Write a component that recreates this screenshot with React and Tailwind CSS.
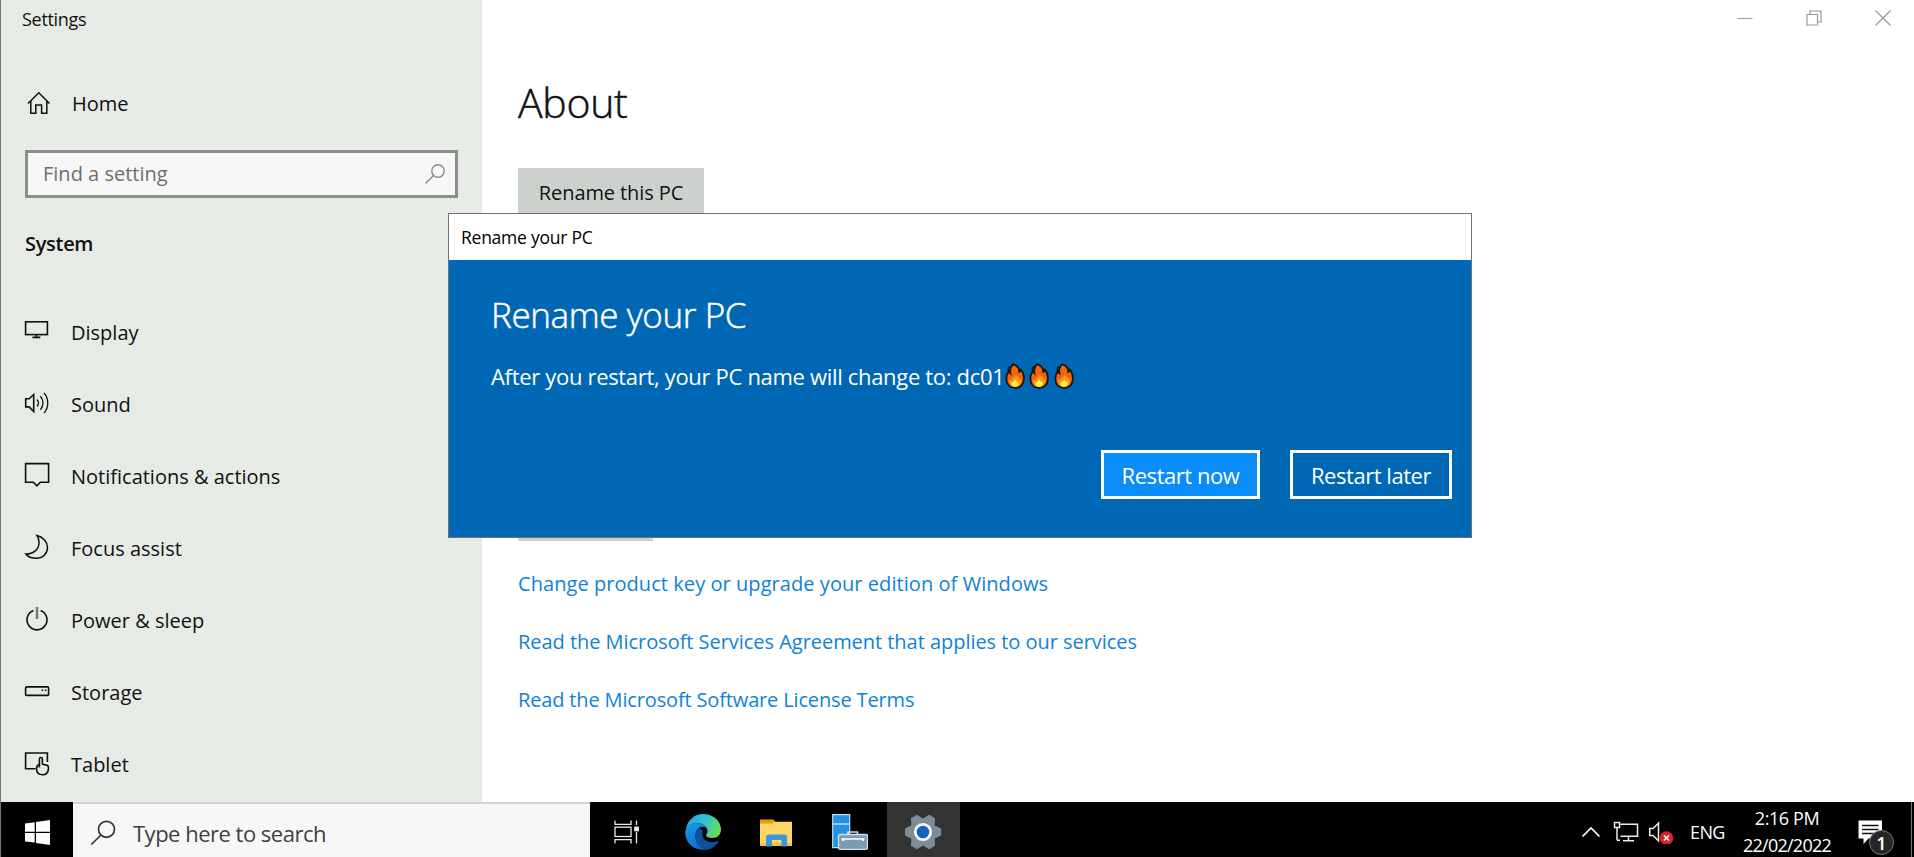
const navItems = [
    {
        label: 'Display',
        icon: (
            <>
                <rect x="1.6" y="5.8" width="21.8" height="12.8" />
                <path d="M12.4 18.6v2.8M8.4 21.4h8" />
            </>
        ),
    },
    {
        label: 'Sound',
        icon: (
            <>
                <path d="M1.7 10.8h3.4l4.6-4.3v17l-4.6-4.6H1.7z" />
                <path d="M13 11.5c1.7 2 1.7 5 0 7M16.4 8.2c3.4 3.8 3.4 9.8 0 13.6M20 5c5 5.4 5 14.6 0 20" strokeWidth="1.3" />
            </>
        ),
    },
    {
        label: 'Notifications & actions',
        icon: <path d="M1.6 3.6h23v18.6h-8.2l-3.5 3.6-3.5-3.6H1.6z" />,
    },
    {
        label: 'Focus assist',
        icon: (
            <path d="M13 3.6c6.2 1.6 10.5 6.2 10.5 12 0 6-4.9 10.7-11 10.7-4.5 0-8.5-1.5-10.7-4.3C9.5 22 15 17.3 15 10.8c0-2.8-.7-5.2-2-7.2z" strokeWidth="1.5" />
        ),
    },
    {
        label: 'Power & sleep',
        icon: (
            <>
                <path d="M9.4 6.5a10 10 0 1 0 7.2 0" />
                <path d="M13 3v12" stroke="#777" strokeWidth="2.4" />
            </>
        ),
    },
    {
        label: 'Storage',
        icon: (
            <>
                <rect x="1.6" y="10.9" width="23" height="8.5" rx="1" />
                <path d="M17.6 14.3h1.6M20.8 14.3h1.6" />
            </>
        ),
    },
    {
        label: 'Tablet',
        icon: (
            <>
                <path d="M11.5 20.8H1.6V5h21.8v9" />
                <path d="M15.4 19.5v-8.3c0-2.2 3-2.2 3 0v5l4 .9c1.8.5 2.3 1.5 2.1 3.5-.4 4-2.2 6.2-5.8 6.2-3.7 0-6-2-6.2-5.5-.1-2.5.7-4.2 2.9-5" />
            </>
        ),
    },
]

const Flame = () => (
    <svg viewBox="0 0 20 26" className="h-[26px] w-5 shrink-0">
        <path
            d="M8.2 1.2c4.3 1.5 6.2 4.3 6 7.8 1-.3 1.5-1 1.7-2.2 2.2 2.7 3 5.5 3 8.7 0 5.7-3.5 9.4-8.7 9.4-5.3 0-8.8-3.6-8.8-9.2 0-3.2 1-5.7 2.8-7.7.2 1.2.6 2 1.3 2.5-.7-3.7.1-6.9 2.7-9.3z"
            fill="#f4640c"
            stroke="#1c1208"
            strokeWidth="1.7"
        />
        <path d="M4.5 3.5C3.2 5 3 6.5 3.3 8" fill="none" stroke="#1c1208" strokeWidth="1.5" />
        <path d="M10.5 12c2.8 1.5 3.9 3 3.6 4.7l1.7-.9c1.2 4.5-1.2 8.2-5.7 8.2-4.4 0-6.8-3.4-5.5-7.7l1.9 1.5c-.2-3 3.2-3.2 4-5.8z" fill="#fb9c18" />
        <path d="M10.5 16.5c.3 1.5 1.5 1.8 2 3l1.2-.5c.2 2.7-1 4.8-3.6 4.8s-4-2.1-3.6-4.8l1.3.7c.3-1.5 2.2-1.7 2.7-3.2z" fill="#fff25a" />
    </svg>
)

const WindowControls = () => (
    <div className="flex h-[35px] justify-end gap-[53px] pr-[23px] pt-2.5">
        <svg viewBox="0 0 16 16" className="size-4" stroke="#999" fill="none">
            <path d="M0.5 8.5h15" />
        </svg>
        <svg viewBox="0 0 16 16" className="size-4" stroke="#999" fill="none" strokeWidth="1.2">
            <path d="M1 4.5h10.5v10.5H1zM4 4V1h11v11h-3" />
        </svg>
        <svg viewBox="0 0 16 16" className="size-4" stroke="#999" fill="none" strokeWidth="1.3">
            <path d="M0.5 0.5l15 15M15.5 0.5l-15 15" />
        </svg>
    </div>
)

const Sidebar = () => (
    <aside className="flex w-[481px] shrink-0 flex-col bg-[#e6ebe6]">
        <div className="h-[75px] pl-[21px] pt-[6px] text-[18px] leading-[26px] tracking-[-0.3px]">Settings</div>
        <div className="flex h-14 items-center pl-[26px]">
            <svg viewBox="0 0 24 24" className="size-6 shrink-0" fill="none" stroke="#111" strokeWidth="1.5">
                <path d="M1 12.5L11.8 1.8 22.5 12.5M3.8 10v12.3h5V14h5.8v8.3h5.2V10" />
            </svg>
            <span className="ml-[21px] mt-[2px]">Home</span>
        </div>
        <div className="ml-6 mt-[19px] flex h-[48px] w-[433px] items-center border-[3px] border-[#8c8e8c] bg-[#f7f7f7] pl-[15px] pr-[9px]">
            <span className="flex-1 text-[#6e6e6e]">Find a setting</span>
            <svg viewBox="0 0 22 22" className="size-[22px]" fill="none" stroke="#8c8c8c" strokeWidth="1.4">
                <circle cx="14" cy="8" r="6.2" />
                <path d="M9.5 12.5L1.5 20.5" />
            </svg>
        </div>
        <div className="mt-[31px] h-[30px] pl-[24px] font-semibold leading-[30px] tracking-[-0.3px]">System</div>
        <nav className="mt-[37px]">
            {navItems.map((item) => (
                <div key={item.label} className="flex h-[72px] items-center pl-[23px]">
                    <svg viewBox="0 0 28 28" className="-mt-1 size-7 shrink-0" fill="none" stroke="#111" strokeWidth="1.6">
                        {item.icon}
                    </svg>
                    <span className="ml-[19px] mt-px">{item.label}</span>
                </div>
            ))}
        </nav>
    </aside>
)

const RenameDialog = () => (
    <div className="absolute left-[447px] top-[213px] flex h-[325px] w-[1024px] flex-col border border-[#6c7378] bg-[#0067b5] text-white">
        <div className="flex h-[46px] items-center bg-white pl-3 text-[17.5px] tracking-[-0.25px] text-black">
            Rename your PC
        </div>
        <div className="flex flex-1 flex-col pl-[42px] pr-[19px]">
            <h2 className="mt-[31px] text-[35px] font-light leading-[48px] tracking-[-0.4px] [-webkit-text-stroke:0.5px]">Rename your PC</h2>
            <div className="mt-[22px] flex h-[30px] items-center text-[22px] leading-[30px] tracking-[-0.32px]">
                After you restart, your PC name will change to: dc01
                <span className="flex gap-[4.5px]">
                    <Flame />
                    <Flame />
                    <Flame />
                </span>
            </div>
            <div className="mt-[59px] flex justify-end gap-[30px] text-[22px] tracking-[-0.45px]">
                <button className="h-[49px] w-[159px] border-[3px] border-white bg-[#0a8cfa]">Restart now</button>
                <button className="h-[49px] w-[162px] border-[3px] border-white">Restart later</button>
            </div>
        </div>
    </div>
)

const EdgeIcon = () => (
    <svg viewBox="0 0 36 36" className="size-9">
        <defs>
            <linearGradient id="edgeTop" x1="0" y1="0.3" x2="1" y2="0.6">
                <stop offset="0" stopColor="#2aa5e8" />
                <stop offset="0.5" stopColor="#2fc4cf" />
                <stop offset="1" stopColor="#6be04e" />
            </linearGradient>
            <linearGradient id="edgeLeft" x1="0" y1="0" x2="0.5" y2="1">
                <stop offset="0" stopColor="#1b9de2" />
                <stop offset="1" stopColor="#0b6cc8" />
            </linearGradient>
        </defs>
        <path d="M1 15C2.5 6 9.5 0 18 0c10 0 18 7 18 15.5 0 5-3.8 8.5-8.7 8.5-4 0-6.3-1.2-6.3-2.7 0-1 1.5-1.8 1.5-4.3C22.5 12.5 17 9 11.5 9 7 9 3.5 11 1 15z" fill="url(#edgeTop)" />
        <path d="M0.3 20C-0.5 13 5 9 11.5 9c6 0 11 3.5 11 8 0-2.5-2-4.2-5-4.2-4 0-7 4-7 9 0 7 5 12.7 11.5 13.7C11 37.5 1.5 31 0.3 20z" fill="url(#edgeLeft)" />
        <path d="M14.5 13.5c-7 5-5 21 8.5 22 4.5-1 8-3.8 10.3-7.5.5-.9-.3-1.3-1-1-7 3-14.8.2-14.8-7 0-1.3.1-2 .4-3z" fill="#124f9c" />
    </svg>
)

const FolderIcon = () => (
    <svg viewBox="0 0 34 34" className="size-[34px]">
        <path d="M1 4.5h13.5l2 2.5v4H1z" fill="#e8a000" />
        <path d="M1 8.5h12l3-1.8h17V31H1z" fill="#fdd663" />
        <path d="M1 28h32v3H1z" fill="#f3c13c" />
        <path d="M7 31.5V22.5c0-2 1-3 3-3h15c2 0 3 1 3 3v9h-5.5V25h-9.5v6.5z" fill="#3a96dd" />
    </svg>
)

const ServerIcon = () => (
    <svg viewBox="0 0 36 36" className="size-9">
        <path d="M0.7 0.7h17v33h-17z" fill="#2492e0" stroke="#bcdff7" strokeWidth="1.2" />
        <path d="M1 10h16.5" stroke="#bcdff7" strokeWidth="1.5" />
        <path d="M16 20.5v-2.5h9.5v2.5" fill="none" stroke="#cfdde6" strokeWidth="1.6" />
        <rect x="6.5" y="20.5" width="29" height="14.8" rx="1.5" fill="#7a9db5" stroke="#cfe0ea" strokeWidth="1.3" />
        <path d="M9.5 25h23" stroke="#fff" strokeWidth="1.5" />
        <path d="M11 25v2M31 25v2" stroke="#fff" strokeWidth="1.8" />
    </svg>
)

const GearIcon = () => (
    <svg viewBox="-18 -18 36 36" className="size-9">
        <g fill="#7f8c95">
            {[0, 60, 120].map((angle) => (
                <path key={angle} d="M-18-3.5L-12-6.5H12L18-3.5V3.5L12 6.5H-12L-18 3.5z" transform={`rotate(${angle})`} />
            ))}
            <circle r="13" />
        </g>
        <circle r="7.7" fill="#1064b8" stroke="#f4f6f7" strokeWidth="2.8" />
    </svg>
)

const Taskbar = () => (
    <footer className="h-[55px] shrink-0 overflow-hidden bg-black">
        <div className="flex h-[60px] items-center">
            <div className="flex w-[72px] justify-center">
                <svg viewBox="0 0 25 25" className="size-[25px]" fill="#fff">
                    <path d="M0 3.5l9.7-1.3v9.6H0zM11 2l14-2v11.8H11zM0 13h9.7v9.6L0 21.4zM11 13h14v12l-14-2z" />
                </svg>
            </div>
            <div className="flex h-full w-[517px] items-center border-t-2 border-[#d2d4d3] bg-[#f7f7f7] pl-[17px]">
                <svg viewBox="0 0 26 26" className="-mt-px size-[26px] shrink-0" fill="none" stroke="#333" strokeWidth="1.7">
                    <circle cx="16.5" cy="9.3" r="8" />
                    <path d="M11 15L1.3 24.5" />
                </svg>
                <span className="-mt-px ml-[17px] text-[22px] tracking-[-0.5px] text-[#3f3f3f]">Type here to search</span>
            </div>
            <div className="flex w-[76px] justify-center pr-[3px]">
                <svg viewBox="0 0 26 26" className="size-[26px]" fill="none" stroke="#e8e8e8" strokeWidth="1.3">
                    <path d="M1 1.5v3.8h16V1.5M1 24.5v-3.8h16v3.8" />
                    <rect x="1" y="8.2" width="16" height="9.3" />
                    <path d="M22.5 1.5V6M22.5 13v11.5" />
                    <rect x="20.8" y="8.2" width="3.5" height="3.5" fill="#fff" />
                </svg>
            </div>
            <div className="flex w-[73.5px] justify-center"><EdgeIcon /></div>
            <div className="flex w-[73.5px] justify-center"><FolderIcon /></div>
            <div className="flex w-[73.5px] justify-center"><ServerIcon /></div>
            <div className="flex h-full w-[73px] items-center justify-center bg-[#333]"><GearIcon /></div>
            <div className="ml-auto flex h-full items-center text-white">
                <svg viewBox="0 0 20 20" className="size-5" fill="none" stroke="#fff" strokeWidth="1.6">
                    <path d="M1.5 14.5L10 6l8.5 8.5" />
                </svg>
                <svg viewBox="0 0 26 24" className="ml-[12px] h-6 w-[26px]" fill="none" stroke="#eee" strokeWidth="1.5">
                    <path d="M7.5 4.2h17v12h-17M1.5 2.5h5v5h-5zM4 7.5v12.8M4 20.3h3M10 20.8h11M15.5 16.5v4" />
                </svg>
                <svg viewBox="0 0 26 24" className="ml-[9px] h-6 w-[26px]" fill="none" stroke="#eee" strokeWidth="1.5">
                    <path d="M1.7 8.5h3.5L10.5 3v18l-5.3-5.5H1.7z" />
                    <circle cx="18.5" cy="18" r="6.8" fill="#d8242c" stroke="none" />
                    <path d="M16 15.5l5 5M21 15.5l-5 5" stroke="#fff" />
                </svg>
                <span className="ml-[16px] w-[36px] text-[18px] tracking-[-0.6px]">ENG</span>
                <div className="ml-[15px] w-[92px] text-center text-[18px] leading-[27px] tracking-[-0.4px]">
                    <div>2:16 PM</div>
                    <div className="tracking-[-0.75px]">22/02/2022</div>
                </div>
                <div className="relative ml-[25px] size-6">
                    <svg viewBox="0 0 24 24" className="size-6">
                        <path d="M0.5 0.5h23.5v18H10.5L5.5 24v-5.5h-5z" fill="#fff" />
                        <path d="M4 5.5h16.5M4 9.5h16.5M4 13.5h12" stroke="#111" strokeWidth="1.5" />
                    </svg>
                    <span className="absolute left-[11px] top-[10px] flex size-[25px] items-center justify-center rounded-full border border-[#777] bg-[#262626] text-[18px] font-semibold">
                        1
                    </span>
                </div>
                <div className="ml-[29px] mr-[2px] h-full w-px bg-[#777]" />
            </div>
        </div>
    </footer>
)

export default function App() {
    return (
        <div className="relative flex h-[857px] w-[1914px] flex-col overflow-hidden border-l border-[#757575] bg-white font-['Open_Sans','Noto_Sans',sans-serif] text-[20px] leading-[28px] text-[#111]">
            <div className="flex h-[802px] overflow-hidden">
                <Sidebar />
                <main className="flex flex-1 flex-col">
                    <WindowControls />
                    <div className="flex flex-col items-start pl-9">
                        <h1 className="mt-[37px] text-[41px] font-light leading-[60px] tracking-[-0.3px] [-webkit-text-stroke:0.5px]">About</h1>
                        <button className="mt-[36px] h-12 w-[186px] bg-[#ccd1cd] pt-px tracking-[-0.1px]">Rename this PC</button>
                        <div className="mt-[277px] h-12 w-[135px] bg-[#ccd1cd]" />
                        <div className="mt-[29px] flex flex-col gap-[30px] text-[#0f82d8]">
                            <a href="#" className="tracking-[0.06px]">Change product key or upgrade your edition of Windows</a>
                            <a href="#" className="tracking-[-0.04px]">Read the Microsoft Services Agreement that applies to our services</a>
                            <a href="#" className="tracking-[-0.15px]">Read the Microsoft Software License Terms</a>
                        </div>
                    </div>
                </main>
            </div>
            <Taskbar />
            <RenameDialog />
        </div>
    )
}
